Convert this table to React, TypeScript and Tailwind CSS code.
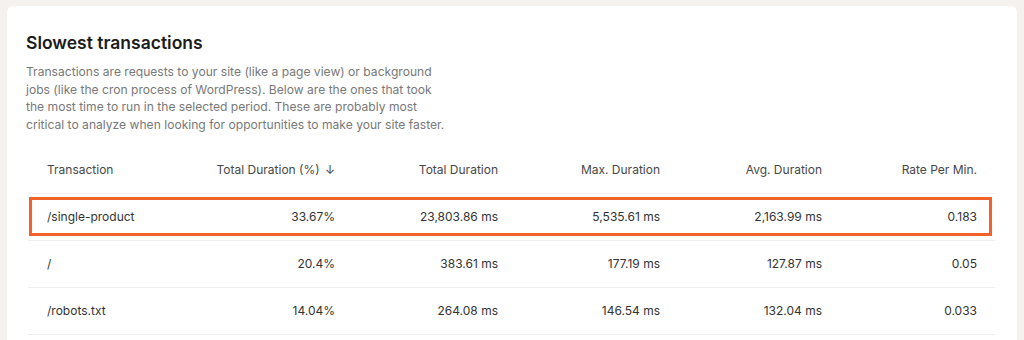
import React from 'react';

interface Row {
  name: string;
  pct: string;
  total: string;
  max: string;
  avg: string;
  rate: string;
  highlight?: boolean;
}

const rows: Row[] = [
  { name: '/single-product', pct: '33.67%', total: '23,803.86 ms', max: '5,535.61 ms', avg: '2,163.99 ms', rate: '0.183', highlight: true },
  { name: '/', pct: '20.4%', total: '383.61 ms', max: '177.19 ms', avg: '127.87 ms', rate: '0.05' },
  { name: '/robots.txt', pct: '14.04%', total: '264.08 ms', max: '146.54 ms', avg: '132.04 ms', rate: '0.033' },
];

// lines broken as in the design
const intro = [
  'Transactions are requests to your site (like a page view) or background',
  'jobs (like the cron process of WordPress). Below are the ones that took',
  'the most time to run in the selected period. These are probably most',
  'critical to analyze when looking for opportunities to make your site faster.',
];

const gridCols = 'grid grid-cols-[170px_155px_163px_162px_162px_155px]';

const App: React.FC = () => {
  return (
    <div className="h-[340px] overflow-hidden bg-[#f4f1ef] pt-[6px] pl-[7px] pr-[7px] font-['Inter','Liberation_Sans',sans-serif]">
      <div className="bg-white rounded-md pt-[25px] px-[19px] h-[400px]">
        <h2 className="text-[17.5px] leading-[24px] font-semibold text-[#1c1c1c]">Slowest transactions</h2>
        <p className="mt-[8px] text-[12.1px] leading-[17.5px] text-[#787878]">
          {intro.map((line, i) => (
            <span key={i} className="block whitespace-nowrap">{line}</span>
          ))}
        </p>

        <div className="mt-[14px] ml-[2px] mr-[3px] text-[12px] text-[#333333]">
          <div className={`${gridCols} h-[47px] items-center border-b border-[#efefef] text-[#474747]`}>
            <div className="pl-[19px]">Transaction</div>
            <div className="text-right pr-[18px]">Total Duration (%) <span className="ml-[2px]">↓</span></div>
            <div className="text-right pr-[18px]">Total Duration</div>
            <div className="text-right pr-[18px]">Max. Duration</div>
            <div className="text-right pr-[18px]">Avg. Duration</div>
            <div className="text-right pr-[18px]">Rate Per Min.</div>
          </div>
          {rows.map(r => (
            <div key={r.name} className={`${gridCols} relative h-[47px] items-center border-b border-[#efefef]`}>
              <div className="pl-[19px]">{r.name}</div>
              <div className="text-right pr-[18px]">{r.pct}</div>
              <div className="text-right pr-[18px]">{r.total}</div>
              <div className="text-right pr-[18px]">{r.max}</div>
              <div className="text-right pr-[18px]">{r.avg}</div>
              <div className="text-right pr-[18px]">{r.rate}</div>
              {r.highlight && (
                <div className="absolute left-[1px] right-[3px] top-[3px] bottom-[4px] border-[3px] border-[#f1612a] pointer-events-none" />
              )}
            </div>
          ))}
        </div>
      </div>
    </div>
  );
};

export default App;
